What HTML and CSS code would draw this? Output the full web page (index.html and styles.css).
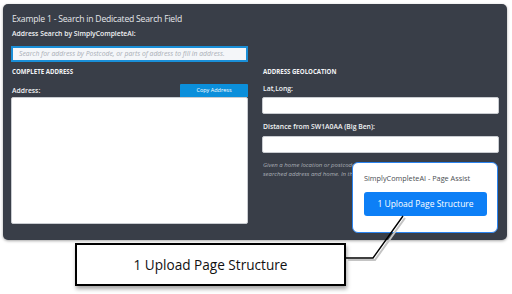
FILE: index.html
```html
<!DOCTYPE html>
<html>
<head>
<meta charset="utf-8">
<link rel="stylesheet" href="styles.css">
</head>
<body>
<div class="stage">
  <div class="panel">
    <h1 class="title">Example 1 - Search in Dedicated Search Field</h1>
    <div class="lbl lbl-search">Address Search by SimplyCompleteAI:</div>
    <div class="search">Search for address by Postcode, or parts of address to fill in address.</div>
    <div class="cols">
      <div class="col">
        <div class="head">COMPLETE ADDRESS</div>
        <div class="addr-row">
          <span class="lbl">Address:</span>
          <span class="copy-btn">Copy Address</span>
        </div>
        <div class="textarea"></div>
      </div>
      <div class="col">
        <div class="head">ADDRESS GEOLOCATION</div>
        <div class="lbl lbl-lat">Lat,Long:</div>
        <div class="field"></div>
        <div class="lbl lbl-dist">Distance from SW1A0AA (Big Ben):</div>
        <div class="field field-2"></div>
        <p class="help">Given a home location or postcode, we calculate the distance between the<br>searched address and home. In this example we use Big Ben.</p>
      </div>
    </div>
  </div>
  <div class="assist">
    <div class="assist-title">SimplyCompleteAI - Page Assist</div>
    <div class="assist-btn">1 Upload Page Structure</div>
  </div>
  <div class="callout">1 Upload Page Structure</div>
  <svg class="connector" width="512" height="294" viewBox="0 0 512 294">
    <polyline points="348,260 375,260 405,218" fill="none" stroke="#c4c4c4" stroke-width="2"/>
    <polyline points="346,258 373,258 403,216" fill="none" stroke="#000" stroke-width="1.4"/>
  </svg>
</div>
</body>
</html>
```
FILE: styles.css
```css
* { box-sizing: border-box; }
html, body { margin: 0; padding: 0; background: #fff; }
body { width: 512px; height: 294px; overflow: hidden; font-family: "Open Sans", "DejaVu Sans", sans-serif; }
.stage { position: relative; width: 512px; height: 294px; padding-top: 4px; }

.panel {
  margin-left: 3px;
  width: 504px;
  height: 236px;
  background: #393e48;
  border-radius: 5px;
  padding: 8px 8px 0 8px;
  box-shadow: 0 1px 3px rgba(0,0,0,0.35);
}
.title {
  margin: 0 0 0 1px;
  font-size: 8.6px;
  letter-spacing: -0.2px;
  line-height: 14px;
  font-weight: 400;
  color: #e6e8eb;
}
.lbl {
  font-size: 6.8px;
  line-height: 10px;
  font-weight: 600;
  color: #f2f3f5;
  padding-left: 1px;
  white-space: nowrap;
}
.lbl-search { margin-top: 3px; }
.search {
  margin-top: 7px;
  width: 237px;
  height: 16px;
  border: 2px solid #1a8fd8;
  background: #f4f6f9;
  padding-left: 6px;
  font-size: 6.8px;
  line-height: 12px;
  font-style: italic;
  color: #a8adb5;
  white-space: nowrap;
  overflow: hidden;
}
.cols {
  margin-top: 5px;
  display: grid;
  grid-template-columns: 237px 237px;
  column-gap: 14px;
}
.head {
  font-size: 6.1px;
  line-height: 10px;
  font-weight: 700;
  color: #f2f3f5;
  padding-left: 1px;
}
.addr-row {
  margin-top: 7px;
  height: 13px;
  display: flex;
  align-items: center;
  justify-content: space-between;
}
.copy-btn {
  width: 68px;
  height: 13px;
  background: #0b8fdb;
  color: #fff;
  font-size: 5.5px;
  line-height: 13px;
  text-align: center;
  border-radius: 1px 1px 0 0;
}
.textarea {
  height: 127px;
  background: #fff;
  border: 1px solid #c9ccd1;
  border-radius: 2px;
}
.lbl-lat { margin-top: 7px; }
.field {
  margin-top: 3px;
  height: 17px;
  background: #fff;
  border: 1px solid #c9ccd1;
  border-radius: 2px;
}
.lbl-dist { margin-top: 8px; }
.field-2 { margin-top: 4px; }
.help {
  margin: 8px 0 0 1px;
  font-size: 6px;
  line-height: 9px;
  font-style: italic;
  color: #a9aeb6;
  white-space: nowrap;
}

.assist {
  position: absolute;
  left: 352px;
  top: 162px;
  width: 146px;
  height: 71px;
  background: #fff;
  border: 1.5px solid #2b84f0;
  border-radius: 6px;
  padding: 10px 0 0 11px;
}
.assist-title {
  font-size: 7.3px;
  line-height: 10px;
  font-weight: 500;
  color: #4a4d52;
}
.assist-btn {
  margin-top: 9px;
  width: 123px;
  height: 24px;
  background: #0d7ff6;
  border-radius: 3px;
  color: #fff;
  font-size: 8.5px;
  line-height: 24px;
  text-align: center;
}

.callout {
  margin: 3px 0 0 75px;
  width: 271px;
  height: 43px;
  border: 2px solid #000;
  background: #fff;
  box-shadow: 1px 3px 4px rgba(0,0,0,0.35);
  font-size: 13.6px;
  line-height: 39px;
  text-align: center;
  color: #111;
}
.connector { position: absolute; left: 0; top: 0; pointer-events: none; }
```
